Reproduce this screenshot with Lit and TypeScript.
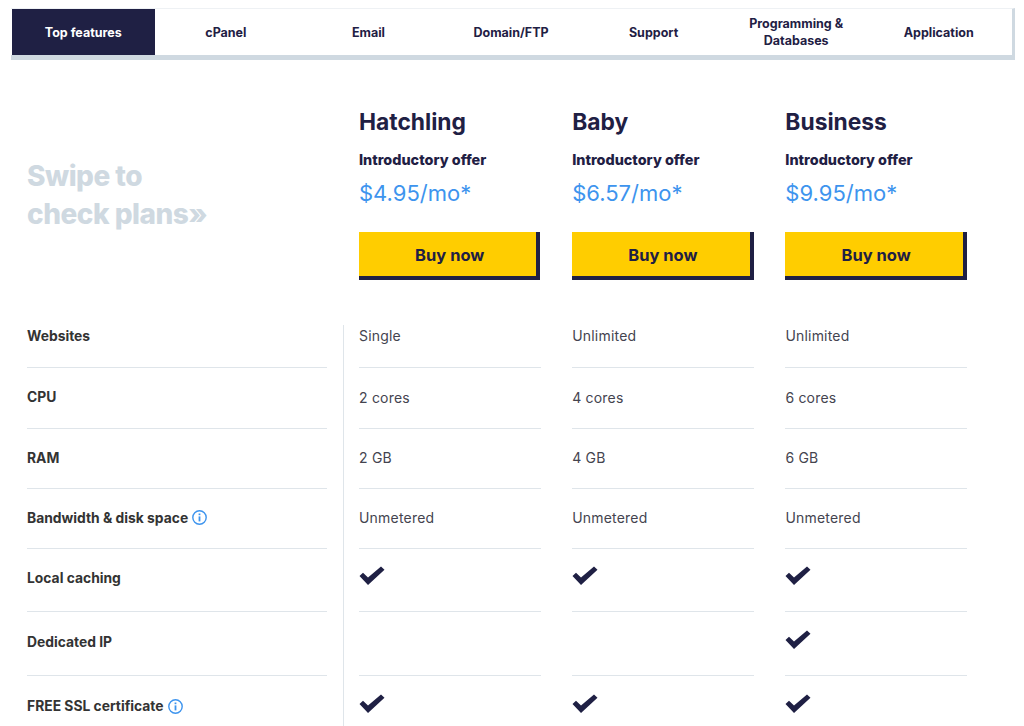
import { LitElement, html, css, svg } from "lit";
import { customElement } from "lit/decorators.js";

const tabs = ["Top features", "cPanel", "Email", "Domain/FTP", "Support", "Programming & Databases", "Application"];
const plans = [
  { name: "Hatchling", price: "$4.95/mo*" },
  { name: "Baby", price: "$6.57/mo*" },
  { name: "Business", price: "$9.95/mo*" },
];
type Cell = string | boolean;
const rows: { label: string; info?: boolean; cells: Cell[]; cls: string }[] = [
  { label: "Websites", cells: ["Single", "Unlimited", "Unlimited"], cls: "r0" },
  { label: "CPU", cells: ["2 cores", "4 cores", "6 cores"], cls: "r1" },
  { label: "RAM", cells: ["2 GB", "4 GB", "6 GB"], cls: "r2" },
  { label: "Bandwidth & disk space", info: true, cells: ["Unmetered", "Unmetered", "Unmetered"], cls: "r2" },
  { label: "Local caching", cells: [true, true, true], cls: "r3" },
  { label: "Dedicated IP", cells: [false, false, true], cls: "r4" },
  { label: "FREE SSL certificate", info: true, cells: [true, true, true], cls: "r4 last" },
];
const check = svg`<path d="M0.5 10 L4 6.8 L9 11.6 L22 0.5 L25.5 3.8 L9 19 Z" fill="#1f2044"/>`;
const info = svg`<circle cx="7.5" cy="7.5" r="6.7" fill="none" stroke="#3d94ee" stroke-width="1.4"/><rect x="6.6" y="6.4" width="1.8" height="5" fill="#3d94ee"/><rect x="6.6" y="3.5" width="1.8" height="1.7" fill="#3d94ee"/>`;

@customElement("app-root")
export class AppRoot extends LitElement {
  static styles = css`
    :host { display: block; width: 1024px; height: 726px; overflow: hidden; background: #fff; font-family: "Inter", "Liberation Sans", sans-serif; color: #1f2044; }
    .nav { margin: 8px 9px 0 11px; display: flex; height: 46px; padding: 0 2px 0 1px; border-bottom: 5px solid #cfd9e1; border-right: 3px solid #cfd9e1; border-top: 1px solid #eef1f4; }
    .tab { flex: 1 1 0; display: flex; align-items: center; justify-content: center; text-align: center; font-size: 12.5px; line-height: 17px; font-weight: 700; padding: 0 20px; }
    .tab.on { background: #1f2044; color: #fff; }
    .plans { display: grid; grid-template-columns: 300.3px repeat(3, 181.5px); column-gap: 31.7px; padding: 47px 0 0 27px; height: 218px; }
    .swipe { font-size: 28px; line-height: 38px; font-weight: 800; color: #cfd9e1; padding-top: 50px; letter-spacing: -0.5px; }
    .plan h2 { margin: 0; font-size: 22.8px; line-height: 30px; font-weight: 700; }
    .offer { margin-top: 14px; font-size: 14.4px; line-height: 18px; font-weight: 800; }
    .price { margin-top: 10px; font-size: 22px; line-height: 28px; font-weight: 400; color: #3d94ee; }
    .buy { margin-top: 25px; height: 42px; padding: 2px 0 0 4px; box-sizing: content-box; background: #ffcd00; border-right: 4px solid #1f2044; border-bottom: 4px solid #1f2044; display: flex; align-items: center; justify-content: center; font-size: 16.5px; font-weight: 700; }
    .c { border-bottom: 1px solid #dfe5ea; display: flex; align-items: center; font-size: 14px; letter-spacing: 0.2px; color: #44444f; box-sizing: border-box; height: 100%; padding-bottom: 2px; }
    .lab { font-weight: 700; font-size: 13.85px; color: #333; gap: 4px; letter-spacing: 0; }
    .r0 { height: 43px; }
    .r0 .c { padding-bottom: 21px; }
    .r1 { height: 61px; }
    .r2 { height: 60px; }
    .r3 { height: 63px; }
    .r4 { height: 64px; }
    .r3 .c, .r4 .c { padding-bottom: 4px; }
    .last .c { border-bottom: 0; }
    .tbl-row { display: grid; grid-template-columns: 300px 32px 181.5px 31.7px 181.5px 31.7px 181.5px; padding-left: 27px; }
    .sp.line { position: relative; }
    .sp.line::before { content: ""; position: absolute; left: 15.5px; top: 0; bottom: 0; width: 1px; background: #dfe5ea; }
    .ck { width: 26px; height: 20px; margin-top: -4px; }
    .inf { width: 15px; height: 15px; }
  `;
  render() {
    return html`
      <div class="nav">${tabs.map((t, i) => html`<div class="tab ${i === 0 ? "on" : ""}">${t}</div>`)}</div>
      <div class="plans">
        <div class="swipe">Swipe to<br />check plans»</div>
        ${plans.map(
          (p) => html`<div class="plan">
            <h2>${p.name}</h2>
            <div class="offer">Introductory offer</div>
            <div class="price">${p.price}</div>
            <div class="buy">Buy now</div>
          </div>`
        )}
      </div>
      ${rows.map(
        (r) => html`<div class="tbl-row ${r.cls}">
          <div class="c lab">${r.label}${r.info ? html`<svg class="inf" viewBox="0 0 15 15">${info}</svg>` : ""}</div>
          <div class="sp line"></div>
          ${r.cells.map(
            (c, i) => html`<div class="c">${c === true ? html`<svg class="ck" viewBox="0 0 26 20">${check}</svg>` : c === false ? "" : c}</div>${i < 2 ? html`<div class="sp"></div>` : ""}`
          )}
        </div>`
      )}
    `;
  }
}
